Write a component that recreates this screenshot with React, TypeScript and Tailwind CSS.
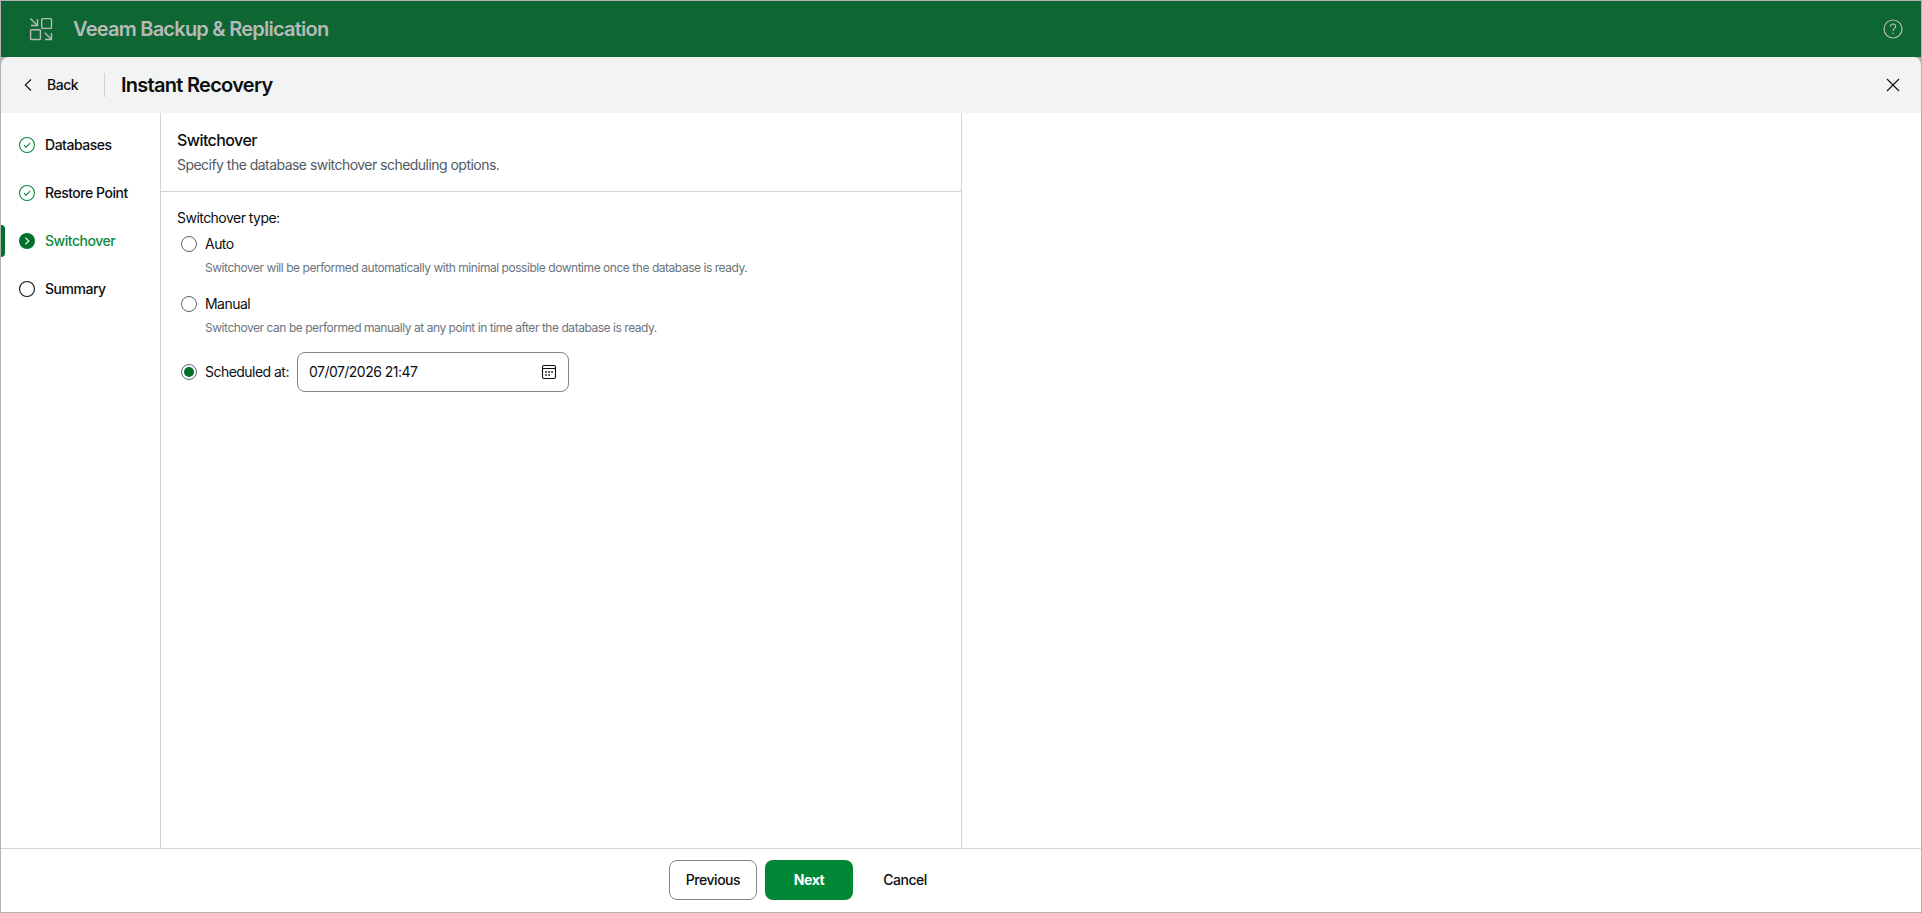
import React from 'react';
import clsx from 'clsx';

type StepState = 'done' | 'active' | 'pending';

interface Step {
  label: string;
  state: StepState;
}

interface SwitchoverOptionProps {
  label: string;
  hint: string;
}

const STEPS: Step[] = [
  { label: 'Databases', state: 'done' },
  { label: 'Restore Point', state: 'done' },
  { label: 'Switchover', state: 'active' },
  { label: 'Summary', state: 'pending' },
];

const ProductIcon = () => (
  <svg className="w-6 h-6" viewBox="0 0 24 24" fill="none" stroke="currentColor" strokeWidth="1.4">
    <rect x="12.7" y="1.6" width="9.8" height="9.8" rx="0.8" />
    <rect x="1.6" y="12.7" width="9.8" height="9.8" rx="0.8" />
    <path d="M1.4 1.4 8 8M8.5 2v6.5H2" />
    <path d="M15.8 15.8l6.4 6.4M22.5 16v6.5H16" />
  </svg>
);

const HelpIcon = () => (
  <svg className="w-5 h-5" viewBox="0 0 20 20" fill="none" stroke="currentColor" strokeWidth="1.2">
    <circle cx="10" cy="10" r="9" />
    <path d="M7.4 7.6c0-1.6 1.1-2.6 2.6-2.6s2.6 1 2.6 2.4c0 1.9-2.5 2.1-2.5 4.2v.5" />
    <path d="M10.1 13.7v1.4" strokeWidth="1.3" />
  </svg>
);

const CalendarIcon = () => (
  <svg className="w-4 h-4" viewBox="0 0 16 16" fill="none" stroke="currentColor">
    <rect x="1.5" y="1.5" width="13" height="13" rx="1.5" strokeWidth="1.1" />
    <path d="M1.5 4.5h13" />
    <path d="M4.2 8h1.7M7.2 8h1.7M10.2 8h1.7M4.2 11h1.7M7.2 11h1.7" strokeWidth="1.7" />
  </svg>
);

const StepIcon = ({ state }: { state: StepState }) => (
  <svg className="w-4 h-4 shrink-0" viewBox="0 0 16 16" fill="none">
    {state === 'done' && (
      <g stroke="#0b8a3c" strokeWidth="1.1">
        <circle cx="8" cy="8" r="7.45" />
        <path d="M5 8.2l2.1 2 3.9-4" />
      </g>
    )}
    {state === 'active' && (
      <>
        <circle cx="8" cy="8" r="8" fill="#00702b" />
        <path d="M6.4 4.6 9.8 8l-3.4 3.4" stroke="#fff" strokeWidth="1.1" />
      </>
    )}
    {state === 'pending' && <circle cx="8" cy="8" r="7.45" stroke="#0c0e10" strokeWidth="1.1" />}
  </svg>
);

const Radio = ({ checked = false }: { checked?: boolean }) => (
  <span className="flex size-4 shrink-0 items-center justify-center rounded-full border border-[#5d666f] bg-white">
    {checked && <span className="size-2.5 rounded-full bg-[#00702b]" />}
  </span>
);

const SwitchoverOption: React.FC<SwitchoverOptionProps> = ({ label, hint }) => (
  <div className="h-[60px] pl-1">
    <div className="flex h-6 items-center gap-2">
      <Radio />
      <span>{label}</span>
    </div>
    <p className="pl-6 text-xs leading-6 tracking-[-0.038em] text-[#6b747c]">{hint}</p>
  </div>
);

const App: React.FC = () => {
  return (
    <div className="flex h-[913px] w-full flex-col border border-[#b3b3b3] bg-white font-['Inter',sans-serif] text-sm text-[#0c0e10]">
      {/* Product bar */}
      <header className="flex h-14 shrink-0 items-center bg-[#0e6633] pr-[18px] pl-7 text-[#b7bab8]">
        <ProductIcon />
        <h1 className="ml-5 flex-1 text-xl font-semibold tracking-[-0.038em]">
          Veeam Backup &amp; Replication
        </h1>
        <HelpIcon />
      </header>

      {/* Wizard title */}
      <div className="shrink-0 bg-[#b3b3b3]">
        <div className="flex h-14 items-center rounded-t-lg bg-[#f2f4f3] pr-[21px] pl-[23px]">
          <svg className="h-3 w-2" viewBox="0 0 8 12" fill="none" stroke="currentColor" strokeWidth="1.1">
            <path d="M7 .5 1.3 6 7 11.5" />
          </svg>
          <span className="ml-[15px] w-[57px] font-medium tracking-[-0.034em]">Back</span>
          <span className="h-6 w-px bg-[#cfd3d5]" />
          <h2 className="ml-4 flex-1 text-xl font-semibold tracking-[-0.036em]">Instant Recovery</h2>
          <svg className="size-3.5" viewBox="0 0 14 14" fill="none" stroke="currentColor" strokeWidth="1.1">
            <path d="M1 1l12 12M13 1 1 13" />
          </svg>
        </div>
      </div>

      <div className="flex min-h-0 flex-1">
        {/* Steps */}
        <nav className="w-40 shrink-0 border-r border-[#d0d4d6] pt-2">
          {STEPS.map(({ label, state }) => (
            <div key={label} className="flex h-12 items-center">
              <span
                className={clsx('h-8 w-1 rounded-r-sm', state === 'active' && 'bg-[#00702b]')}
              />
              <span className="ml-3.5 flex items-center gap-2.5">
                <StepIcon state={state} />
                <span
                  className={clsx(
                    'font-medium tracking-[-0.034em]',
                    state === 'active' && 'text-[#0b8a3c]'
                  )}
                >
                  {label}
                </span>
              </span>
            </div>
          ))}
        </nav>

        {/* Step content */}
        <main className="w-[801px] shrink-0 border-r border-[#d0d4d6] tracking-[-0.038em]">
          <div className="h-[79px] border-b border-[#d0d4d6] px-4 pt-[15px]">
            <h3 className="text-base leading-6 font-medium tracking-[-0.036em]">Switchover</h3>
            <p className="pt-px leading-6 text-[#505a63]">
              Specify the database switchover scheduling options.
            </p>
          </div>

          <div className="px-4 pt-4">
            <p className="h-6 leading-5">Switchover type:</p>
            <SwitchoverOption
              label="Auto"
              hint="Switchover will be performed automatically with minimal possible downtime once the database is ready."
            />
            <SwitchoverOption
              label="Manual"
              hint="Switchover can be performed manually at any point in time after the database is ready."
            />
            <div className="flex h-10 items-center pl-1">
              <Radio checked />
              <span className="ml-2 w-[92px] whitespace-nowrap">Scheduled at:</span>
              <div className="flex h-10 w-[272px] items-center justify-between rounded-lg border border-[#7d868e] px-[11px]">
                <span>07/07/2026 21:47</span>
                <CalendarIcon />
              </div>
            </div>
          </div>
        </main>
      </div>

      {/* Wizard actions */}
      <footer className="h-16 shrink-0 border-t border-[#d0d4d6] pt-[11px]">
        <div className="flex w-[960px] justify-end gap-2 pr-3 font-medium tracking-[-0.034em]">
          <button className="h-10 w-[88px] rounded-lg border border-[#7d868e]">Previous</button>
          <button className="h-10 w-[88px] rounded-lg bg-[#008735] font-bold text-white">
            Next
          </button>
          <button className="h-10 w-[88px]">Cancel</button>
        </div>
      </footer>
    </div>
  );
};

export default App;
